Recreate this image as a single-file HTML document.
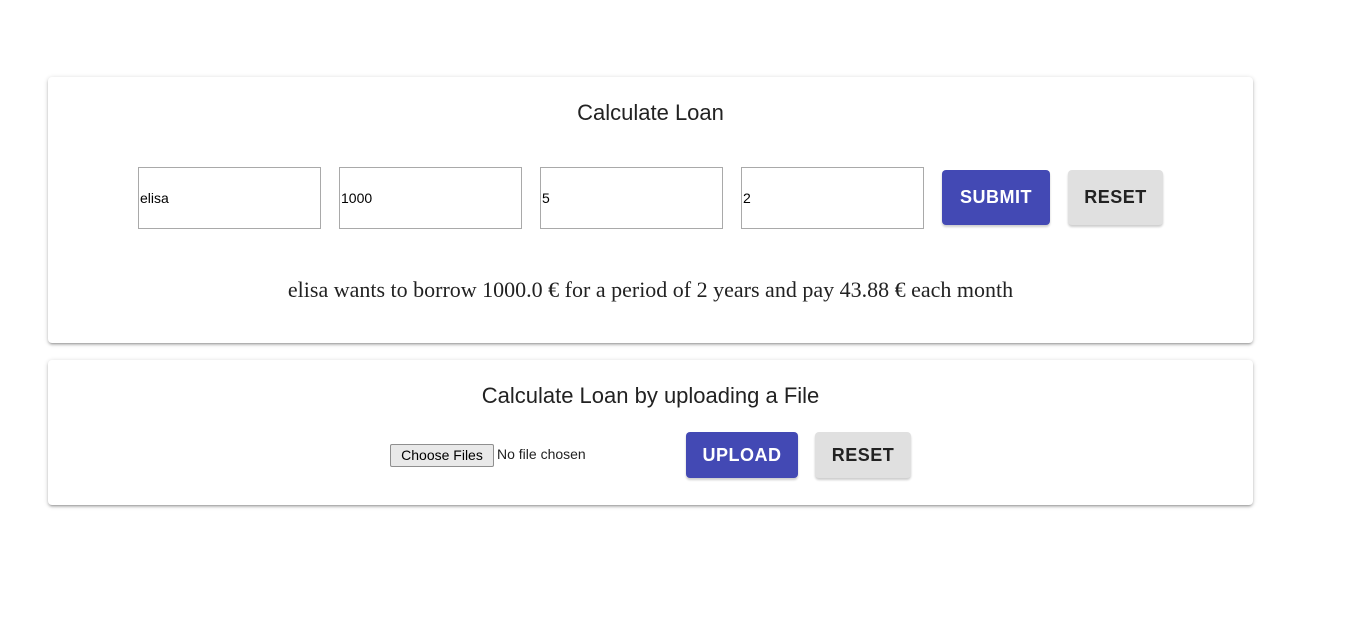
<!DOCTYPE html>
<html><head><meta charset="utf-8"><style>
body{margin:0;background:#fff;width:1352px;height:619px;position:relative;font-family:"Liberation Sans",sans-serif;overflow:hidden}
.card{position:absolute;left:48px;width:1205px;background:#fff;border-radius:4px;box-shadow:0 2px 2px rgba(0,0,0,.14),0 3px 1px -2px rgba(0,0,0,.12),0 1px 5px rgba(0,0,0,.2)}
.title{position:absolute;left:0;width:1301px;text-align:center;font-size:22px;color:#222}
.inp{position:absolute;top:167px;width:181px;height:60px;border:1px solid #a9a9a9;box-sizing:content-box;font-size:14px;line-height:60px;text-indent:1px;color:#000}
.btn{position:absolute;border-radius:4px;font-weight:bold;font-size:18px;letter-spacing:.5px;text-align:center;box-shadow:0 2px 2px rgba(0,0,0,.2)}
.p{background:#4349b4;color:#fff}.g{background:#e0e0e0;color:#222}
</style></head><body>
<div class="card" style="top:77px;height:266px"></div>
<div class="card" style="top:360px;height:145px"></div>
<div class="title" style="top:100px">Calculate Loan</div>
<div class="inp" style="left:138px">elisa</div>
<div class="inp" style="left:339px">1000</div>
<div class="inp" style="left:540px">5</div>
<div class="inp" style="left:741px">2</div>
<div class="btn p" style="left:942px;top:170px;width:108px;height:55px;line-height:55px">SUBMIT</div>
<div class="btn g" style="left:1068px;top:170px;width:95px;height:55px;line-height:55px">RESET</div>
<div style="position:absolute;top:277px;left:0;width:1301px;text-align:center;font-family:'Liberation Serif',serif;font-size:22px;color:#222">elisa wants to borrow 1000.0 € for a period of 2 years and pay 43.88 € each month</div>
<div class="title" style="top:383px">Calculate Loan by uploading a File</div>
<div style="position:absolute;left:390px;top:444px;width:102px;height:21px;border:1px solid #8f8f8f;background:#e9e9e9;border-radius:2px;font-size:14px;line-height:21px;text-align:center;color:#000">Choose Files</div>
<div style="position:absolute;left:497px;top:446px;font-size:14px;color:#222">No file chosen</div>
<div class="btn p" style="left:686px;top:432px;width:112px;height:46px;line-height:46px">UPLOAD</div>
<div class="btn g" style="left:815px;top:432px;width:96px;height:46px;line-height:46px">RESET</div>
</body></html>
